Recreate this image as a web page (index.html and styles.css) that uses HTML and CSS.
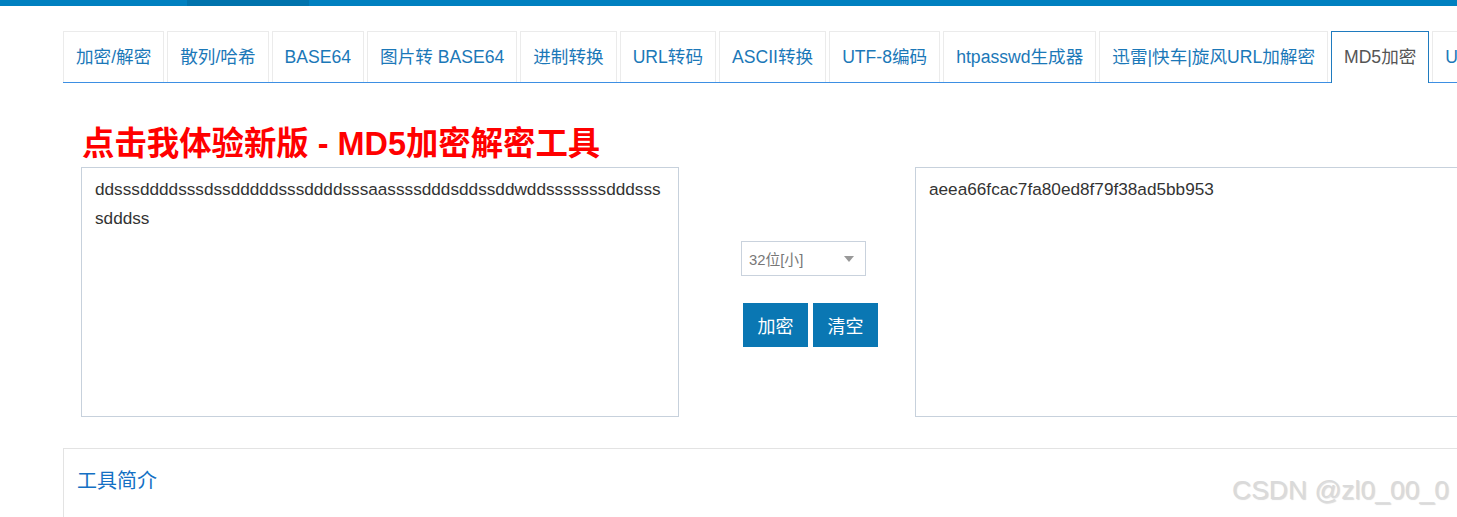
FILE: index.html
```html
<!DOCTYPE html>
<html lang="zh-CN">
<head>
<meta charset="utf-8">
<title>MD5加密</title>
<link rel="stylesheet" href="styles.css">
</head>
<body>
<div class="topbar"><div class="topbar-seg"></div></div>
<div class="wrap">
  <ul class="tabs">
    <li class="tab">加密/解密</li>
    <li class="tab">散列/哈希</li>
    <li class="tab">BASE64</li>
    <li class="tab">图片转 BASE64</li>
    <li class="tab">进制转换</li>
    <li class="tab">URL转码</li>
    <li class="tab">ASCII转换</li>
    <li class="tab">UTF-8编码</li>
    <li class="tab">htpasswd生成器</li>
    <li class="tab">迅雷|快车|旋风URL加解密</li>
    <li class="tab active">MD5加密</li>
    <li class="tab">Unicode转换</li>
  </ul>
  <div class="main">
    <h1 class="promo">点击我体验新版 - MD5加密解密工具</h1>
    <div class="row">
      <textarea class="box" readonly>ddsssddddsssdssdddddsssddddsssaassssdddsddssddwddsssssssdddssssdddss</textarea>
      <div class="mid">
        <div class="select">
          <span class="select-text">32位[小]</span>
          <span class="caret"></span>
        </div>
        <div class="btns">
          <button class="btn">加密</button>
          <button class="btn">清空</button>
        </div>
      </div>
      <textarea class="box" readonly>aeea66fcac7fa80ed8f79f38ad5bb953</textarea>
    </div>
  </div>
  <div class="panel">
    <div class="panel-title">工具简介</div>
  </div>
</div>
<div class="watermark">CSDN @zl0_00_0</div>
</body>
</html>
```
FILE: styles.css
```css
html, body {
  margin: 0;
  padding: 0;
  overflow: hidden;
  background: #fff;
}
body {
  font-family: "Liberation Sans", "Noto Sans CJK SC", sans-serif;
  width: 1457px;
  height: 517px;
  position: relative;
}
.topbar {
  height: 6px;
  background: #0080c0;
  padding-left: 187px;
}
.topbar-seg {
  width: 122px;
  height: 6px;
  background: #0073ad;
}
.wrap {
  margin-left: 63px;
  width: 1468px;
  padding-top: 25px;
}
.tabs {
  list-style: none;
  margin: 0;
  padding: 0;
  display: flex;
  flex-wrap: nowrap;
  gap: 3px;
  border-bottom: 1px solid #3d8fe3;
  height: 51px;
}
.tab {
  flex: none;
  height: 50px;
  line-height: 50px;
  padding: 0 12px;
  border: 1px solid #ebebeb;
  border-bottom: none;
  font-size: 17.6px;
  color: #1b78b8;
  white-space: nowrap;
  background: #fff;
}
.tab.active {
  border-color: #1f7bbf;
  color: #555;
  height: 51px;
  position: relative;
  z-index: 1;
}
.main {
  padding: 0 18px;
}
.promo {
  margin: 41px 0 3px;
  font-size: 32.4px;
  line-height: 40px;
  font-weight: bold;
  color: #ff0000;
  padding-left: 1px;
}
.row {
  display: flex;
  height: 250px;
}
.box {
  box-sizing: border-box;
  width: 598px;
  height: 250px;
  flex: none;
  margin: 0;
  border: 1px solid #c7d1dc;
  padding: 7px 13px;
  font-family: "Liberation Sans", "Noto Sans CJK SC", sans-serif;
  font-size: 17.2px;
  line-height: 29px;
  color: #333;
  resize: none;
  outline: none;
  overflow: hidden;
  background: #fff;
}
.mid {
  width: 236px;
  flex: none;
  padding: 74px 0 0 62px;
  box-sizing: border-box;
}
.select {
  box-sizing: border-box;
  width: 125px;
  height: 35px;
  border: 1px solid #c9d2dd;
  display: flex;
  align-items: center;
  justify-content: space-between;
  padding: 0 11px 0 7px;
}
.select-text {
  font-size: 14.8px;
  color: #777;
}
.caret {
  width: 0;
  height: 0;
  border-left: 5px solid transparent;
  border-right: 5px solid transparent;
  border-top: 6px solid #999;
  margin-top: 1px;
}
.btns {
  display: flex;
  gap: 5px;
  margin: 27px 0 0 2px;
}
.btn {
  width: 65px;
  height: 44px;
  border: none;
  padding: 0;
  background: #0a77b3;
  color: #fff;
  font-family: "Liberation Sans", "Noto Sans CJK SC", sans-serif;
  font-size: 18px;
}
.panel {
  margin-top: 31px;
  border: 1px solid #e3e3e3;
  height: 120px;
  padding: 17px 13px 0;
}
.panel-title {
  font-size: 20px;
  line-height: 30px;
  color: #1470c4;
}
.watermark {
  position: absolute;
  left: 1232px;
  top: 474px;
  font-size: 26.5px;
  line-height: 32px;
  color: #dadada;
  text-shadow: 1px 1px 1px rgba(0, 0, 0, 0.15);
  white-space: nowrap;
}
```
